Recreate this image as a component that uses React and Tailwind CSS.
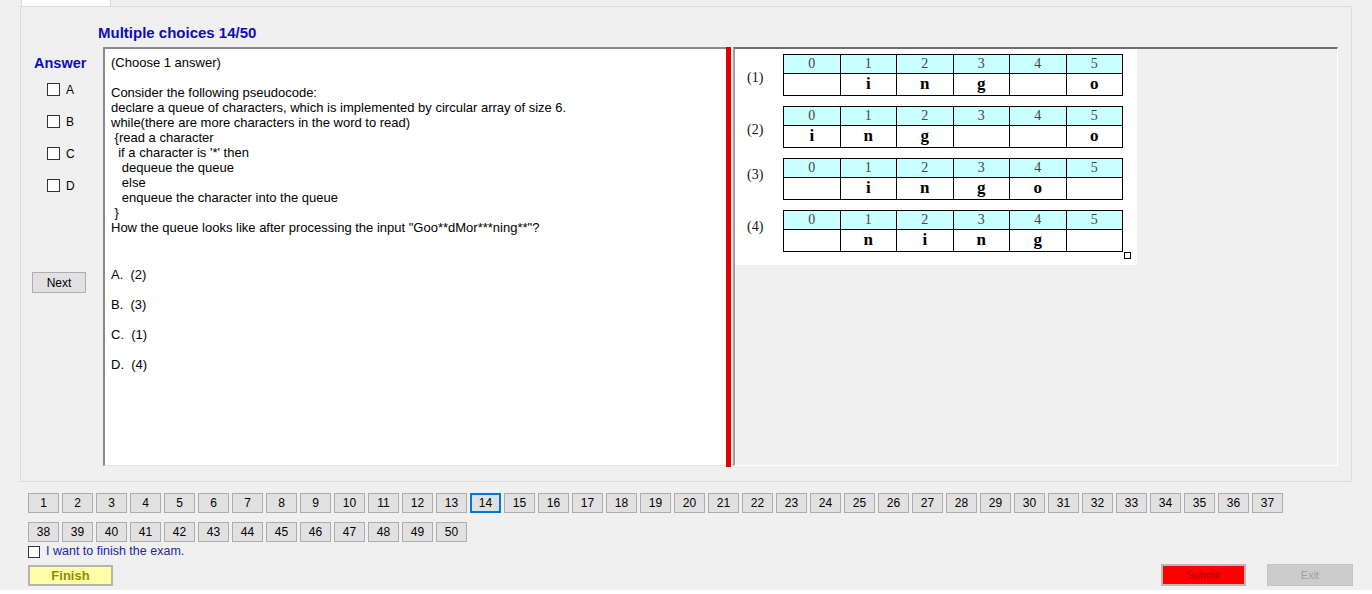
import React from 'react';

const questionLines = [
  'Consider the following pseudocode:',
  'declare a queue of characters, which is implemented by circular array of size 6.',
  'while(there are more characters in the word to read)',
  ' {read a character',
  '  if a character is \'*\' then',
  '   dequeue the queue',
  '   else',
  '   enqueue the character into the queue',
  ' }',
  'How the queue looks like after processing the input "Goo**dMor***ning**"?',
];

const options = ['A. (2)', 'B. (3)', 'C. (1)', 'D. (4)'];

const queues = [
  { cells: ['', 'i', 'n', 'g', '', 'o'], shift: 'mt-[5px]' },
  { cells: ['i', 'n', 'g', '', '', 'o'], shift: 'mt-[5px]' },
  { cells: ['', 'i', 'n', 'g', 'o', ''], shift: '-mt-[9px]' },
  { cells: ['', 'n', 'i', 'n', 'g', ''], shift: '-mt-[9px]' },
];

const QueueTable = ({ label, cells, shift }) => (
  <div className="flex items-center h-[41px]">
    <div className={`w-[48px] pl-[12px] font-['Liberation_Serif'] text-[14px] text-[#111] ${shift}`}>({label})</div>
    <table className="w-[340px] table-fixed border-collapse border border-black font-['Liberation_Serif']">
      <tbody>
        <tr className="h-[19px] bg-[#c8ffff]">
          {cells.map((_, i) => (
            <td key={i} className="border border-black text-center text-[14px] leading-[16px] text-[#444] p-0">{i}</td>
          ))}
        </tr>
        <tr className="h-[22px] bg-white">
          {cells.map((c, i) => (
            <td key={i} className="border border-black text-center text-[17px] leading-[18px] font-bold text-black p-0">{c}</td>
          ))}
        </tr>
      </tbody>
    </table>
  </div>
);

const NavButton = ({ n }) => (
  <button
    className={`w-[31px] h-[20px] shrink-0 bg-[#e1e1e1] text-[12px] leading-none text-black ${n === 14 ? 'border-2 border-[#0078d7]' : 'border border-[#adadad]'}`}
  >
    {n}
  </button>
);

const App = () => {
  const row1 = Array.from({ length: 37 }, (_, i) => i + 1);
  const row2 = Array.from({ length: 13 }, (_, i) => i + 38);

  return (
    <div className="w-[1372px] h-[594px] bg-white overflow-hidden font-['Liberation_Sans',sans-serif] text-[12px] text-black">
      <div className="h-[590px] bg-[#f0f0f0]">
        {/* tab strip */}
        <div className="h-[6px] flex">
          <div className="ml-[21px] w-[90px] bg-white border-x border-[#d9d9d9]" />
        </div>

        {/* tab page */}
        <div className="ml-[20px] w-[1332px] h-[476px] border border-[#dcdcdc] flex flex-col">
          <div className="pt-[17px] pl-[77px] h-[34px] text-[15px] leading-[17px] font-bold text-[#0d0dbf]">
            Multiple choices 14/50
          </div>
          <div className="mt-[6px] flex h-[419px]">
            {/* answer column */}
            <div className="w-[82px] flex flex-col">
              <div className="mt-[8px] pl-[13px] text-[14.5px] leading-[16px] font-bold text-[#0d0dbf]">Answer</div>
              <div className="mt-[12px] flex flex-col gap-[19px] pl-[26px]">
                {['A', 'B', 'C', 'D'].map((l) => (
                  <div key={l} className="flex items-center h-[13px]">
                    <div className="w-[13px] h-[13px] bg-white border border-[#333]" />
                    <span className="ml-[6px] leading-none">{l}</span>
                  </div>
                ))}
              </div>
              <button className="mt-[80px] ml-[11px] w-[54px] h-[21px] bg-[#e1e1e1] border border-[#adadad] text-[12px] leading-none">
                Next
              </button>
            </div>

            {/* question box */}
            <div className="w-[623px] h-[419px] bg-white border-t-2 border-l-2 border-t-[#8a8a8a] border-l-[#8a8a8a] border-b border-b-[#e3e3e3] pl-[6px] pt-[6px] text-[13px] leading-[15px]">
              <div>(Choose 1 answer)</div>
              <div className="h-[15px]" />
              {questionLines.map((line, i) => (
                <div key={i} className="whitespace-pre">{line}</div>
              ))}
              <div className="mt-[32px] flex flex-col gap-[15px]">
                {options.map((o) => (
                  <div key={o} className="whitespace-pre">{o.replace('. ', '.  ')}</div>
                ))}
              </div>
            </div>

            {/* splitter */}
            <div className="w-[5px] h-[420px] bg-[#e00000]" />

            {/* picture panel */}
            <div className="ml-[2px] w-[605px] h-[419px] border-t-2 border-t-[#6e6e6e] border-l-2 border-l-[#a0a0a0] border-r border-b border-r-white border-b-white">
              <div className="w-[402px] h-[216px] bg-white pt-[5px] flex flex-col gap-[11px] relative">
                {queues.map((q, i) => (
                  <QueueTable key={i} label={i + 1} cells={q.cells} shift={q.shift} />
                ))}
                <div className="absolute left-[389px] top-[203px] w-[7px] h-[7px] bg-white border border-black" />
              </div>
            </div>
          </div>
        </div>

        {/* question navigation */}
        <div className="mt-[11px] pl-[28px] flex flex-col gap-[9px]">
          <div className="flex gap-[3px]">
            {row1.map((n) => (
              <NavButton key={n} n={n} />
            ))}
          </div>
          <div className="flex gap-[3px]">
            {row2.map((n) => (
              <NavButton key={n} n={n} />
            ))}
          </div>
        </div>

        <div className="mt-[3px] pl-[28px] flex items-center h-[13px]">
          <div className="w-[12px] h-[12px] bg-white border border-[#333]" />
          <span className="ml-[6px] text-[12.5px] text-[#2424a8] leading-none">I want to finish the exam.</span>
        </div>

        <div className="mt-[6px] flex items-center pl-[28px] pr-[19px]">
          <button className="w-[85px] h-[21px] bg-[#ffffa8] border-2 border-[#b4b4b4] text-[13px] leading-none font-bold text-[#8c8c00]">
            Finish
          </button>
          <div className="ml-auto flex items-center gap-[21px]">
            <button className="w-[85px] h-[22px] bg-[#ff0000] border-2 border-[#b8b8b8] text-[11px] leading-none text-[#b00000]">
              Submit
            </button>
            <button className="w-[86px] h-[22px] bg-[#cccccc] border border-[#c4c4c4] text-[11px] leading-none text-[#a0a0a0]">
              Exit
            </button>
          </div>
        </div>
      </div>
    </div>
  );
};

export default App;
